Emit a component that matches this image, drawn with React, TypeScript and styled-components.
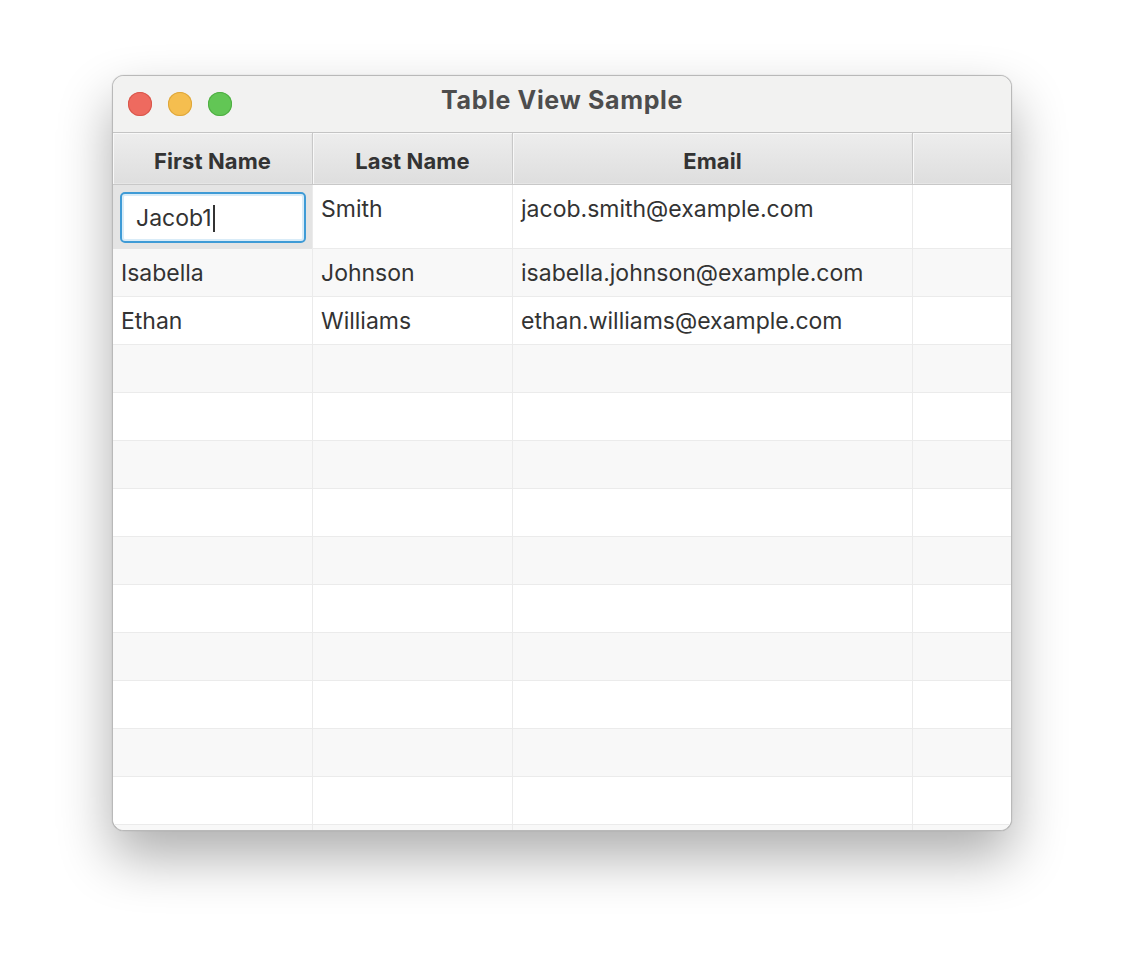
import * as React from "react";
import styled, { createGlobalStyle } from "styled-components";

const GlobalStyle = createGlobalStyle`
  html, body {
    margin: 0;
    padding: 0;
    background: #ffffff;
  }
  body {
    font-family: Inter, "Noto Sans", "Liberation Sans", sans-serif;
  }
`;

const Page = styled.div`
  width: 1124px;
  height: 980px;
  padding: 75px 0 0 112px;
  box-sizing: border-box;
`;

const Window = styled.div`
  width: 900px;
  height: 756px;
  box-sizing: border-box;
  border: 1px solid #b9b9b9;
  border-radius: 12px;
  overflow: hidden;
  background: #ffffff;
  box-shadow: 0 26px 54px rgba(0, 0, 0, 0.32), 0 0 1px rgba(0, 0, 0, 0.3);
  display: flex;
  flex-direction: column;
`;

const TitleBar = styled.div`
  height: 57px;
  flex: 0 0 auto;
  background: #f2f2f1;
  border-bottom: 1px solid #c4c4c4;
  display: grid;
  grid-template-columns: 140px 1fr 140px;
  align-items: center;
  box-sizing: border-box;
`;

const Lights = styled.div`
  display: flex;
  gap: 16px;
  padding-left: 15px;
`;

interface ILight {
  color: string;
  edge: string;
}

const Light = styled.span<ILight>`
  width: 24px;
  height: 24px;
  border-radius: 50%;
  background: ${(props) => props.color};
  box-shadow: inset 0 0 0 1px ${(props) => props.edge};
`;

const Title = styled.div`
  text-align: center;
  font-weight: 700;
  font-size: 25px;
  letter-spacing: 0.65px;
  color: #4d4d4d;
  padding-bottom: 8px;
`;

const Table = styled.div`
  flex: 1 1 auto;
  overflow: hidden;
  display: flex;
  flex-direction: column;
`;

const HeaderRow = styled.div`
  display: grid;
  grid-template-columns: 200px 200px 400px 1fr;
  height: 52px;
  flex: 0 0 auto;
  border-bottom: 1px solid #c8c8c8;
  box-sizing: border-box;
`;

const HeaderCell = styled.div`
  display: flex;
  align-items: center;
  justify-content: center;
  font-weight: 700;
  font-size: 22px;
  letter-spacing: 0.1px;
  color: #333333;
  background: linear-gradient(#ededed, #dedede);
  border-right: 1px solid #c8c8c8;
  box-shadow: inset 1px 1px 0 #f8f8f8, inset -1px -1px 0 #e6e6e6;
  padding-top: 4px;
  box-sizing: border-box;
  &:last-child {
    border-right: none;
  }
`;

interface IRow {
  striped?: boolean;
  tall?: boolean;
}

const Row = styled.div<IRow>`
  display: grid;
  grid-template-columns: 200px 200px 400px 1fr;
  height: ${(props) => (props.tall ? 64 : 48)}px;
  flex: 0 0 auto;
  background: ${(props) => (props.striped ? "#f8f8f8" : "#ffffff")};
  border-bottom: 1px solid #ebebeb;
  box-sizing: border-box;
`;

interface ICell {
  top?: boolean;
}

const Cell = styled.div<ICell>`
  display: flex;
  align-items: ${(props) => (props.top ? "flex-start" : "center")};
  padding: ${(props) => (props.top ? "10px 8px 0" : "0 8px")};
  font-size: 23px;
  color: #333333;
  border-right: 1px solid #ebebeb;
  box-sizing: border-box;
  white-space: nowrap;
  overflow: hidden;
  &:last-child {
    border-right: none;
  }
`;

const EditCell = styled.div`
  background: #e4e4e4;
  border-right: 1px solid #ebebeb;
  padding: 7px 6px 6px 7px;
  box-sizing: border-box;
`;

const Field = styled.div`
  height: 51px;
  box-sizing: border-box;
  border: 2px solid #3f9bd6;
  border-radius: 5px;
  background: #ffffff;
  box-shadow: inset 0 0 0 2px #d9ecf8;
  display: flex;
  align-items: center;
  padding: 1px 0 0 14px;
  font-size: 23px;
  color: #333333;
`;

const Caret = styled.span`
  display: inline-block;
  width: 2px;
  height: 27px;
  margin-left: 1px;
  background: #333333;
`;

const people = [
  { first: "Jacob", last: "Smith", email: "jacob.smith@example.com" },
  { first: "Isabella", last: "Johnson", email: "isabella.johnson@example.com" },
  { first: "Ethan", last: "Williams", email: "ethan.williams@example.com" },
];

const App = () => {
  const emptyRows = Array.from({ length: 11 }, (_, i) => i);

  return (
    <Page>
      <GlobalStyle />
      <Window>
        <TitleBar>
          <Lights>
            <Light color="#ee6a5f" edge="#d8574c" />
            <Light color="#f5be4f" edge="#dea73b" />
            <Light color="#62c655" edge="#4fae43" />
          </Lights>
          <Title>Table View Sample</Title>
          <div />
        </TitleBar>
        <Table>
          <HeaderRow>
            <HeaderCell>First Name</HeaderCell>
            <HeaderCell>Last Name</HeaderCell>
            <HeaderCell>Email</HeaderCell>
            <HeaderCell />
          </HeaderRow>
          <Row tall>
            <EditCell>
              <Field>
                Jacob1
                <Caret />
              </Field>
            </EditCell>
            <Cell top>{people[0].last}</Cell>
            <Cell top>{people[0].email}</Cell>
            <Cell />
          </Row>
          {people.slice(1).map((p, i) => (
            <Row key={p.email} striped={i % 2 === 0}>
              <Cell>{p.first}</Cell>
              <Cell>{p.last}</Cell>
              <Cell>{p.email}</Cell>
              <Cell />
            </Row>
          ))}
          {emptyRows.map((i) => (
            <Row key={i} striped={i % 2 === 0}>
              <Cell />
              <Cell />
              <Cell />
              <Cell />
            </Row>
          ))}
        </Table>
      </Window>
    </Page>
  );
};

export default App;
